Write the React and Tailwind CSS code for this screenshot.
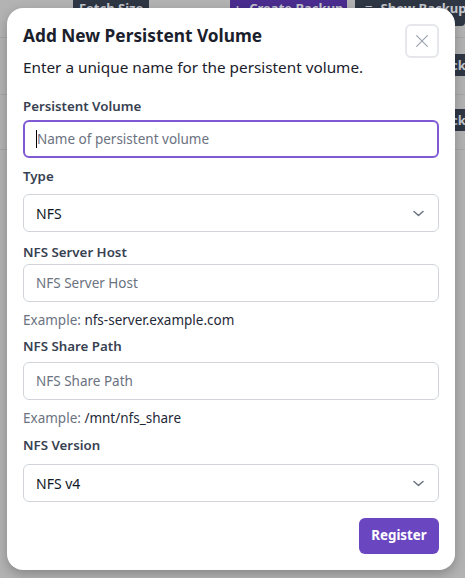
import React from "react";

function Chevron() {
  return (
    <svg width="11" height="7" viewBox="0 0 11 7" fill="none" stroke="#6b7280" strokeWidth="1.5" strokeLinecap="round" strokeLinejoin="round">
      <path d="M1 1.5l4.5 4 4.5-4" />
    </svg>
  );
}

function Label({ children }) {
  return <div className="text-[13.3px] font-semibold text-[#374151] leading-5">{children}</div>;
}

function TextInput({ placeholder, focused }) {
  return (
    <div
      className={
        focused
          ? "h-[38px] w-full rounded-md border-2 border-[#805ad5] px-[11px] flex items-center"
          : "h-[38px] w-full rounded-md border border-[#d1d5db] px-[12px] flex items-center"
      }
    >
      {focused && <span className="w-px h-[18px] bg-black" />}
      <span className="text-[13.5px] text-[#6b7280]">{placeholder}</span>
    </div>
  );
}

function Select({ value }) {
  return (
    <div className="h-[38px] w-full rounded-md border border-[#d1d5db] pl-[12px] pr-[14px] flex items-center justify-between">
      <span className="text-[14px] text-[#111827]">{value}</span>
      <Chevron />
    </div>
  );
}

function BgButton({ className, children }) {
  return (
    <div className={"h-[34px] mt-[-8px] rounded-[4px] flex items-center whitespace-nowrap overflow-hidden text-[13px] font-bold text-[#c4c8ce] " + className}>
      {children}
    </div>
  );
}

export default function App() {
  return (
    <div className="relative w-[465px] h-[578px] overflow-hidden bg-[#b3b3b3]" style={{ fontFamily: '"Noto Sans", "Open Sans", sans-serif' }}>
      {/* background page */}
      <div className="flex flex-col">
        <div className="flex h-[26px] items-start">
          <BgButton className="ml-[73px] w-[82px] bg-[#2f3644] justify-center">Fetch Size</BgButton>
          <BgButton className="ml-[81px] w-[126px] bg-[#4a2d8f] justify-center gap-[8px]"><span>+</span><span>Create Backup</span></BgButton>
          <BgButton className="ml-[8px] w-[110px] shrink-0 bg-[#2f3644] pl-[10px] gap-[8px]"><span>≡</span><span>Show Backups</span></BgButton>
        </div>
        <div className="h-[11px]" />
        <div className="h-px bg-[#a6a6a6]" />
        <div className="h-[16px]" />
        <div className="flex justify-end">
          <div className="w-[14px] h-[22px] bg-[#2f3644] rounded-l-[3px] overflow-hidden whitespace-nowrap text-[13px] font-bold text-[#c4c8ce] leading-[22px]">ckup</div>
        </div>
        <div className="h-[18px]" />
        <div className="h-px bg-[#a6a6a6]" />
        <div className="h-[14px]" />
        <div className="flex justify-end">
          <div className="w-[14px] h-[22px] bg-[#2f3644] rounded-l-[3px] overflow-hidden whitespace-nowrap text-[13px] font-bold text-[#c4c8ce] leading-[22px]">ckup</div>
        </div>
        <div className="h-[18px]" />
        <div className="h-px bg-[#a6a6a6]" />
      </div>

      {/* modal */}
      <div className="absolute left-[7px] top-[8px] w-[448px] h-[562px] bg-white rounded-[16px] shadow-[0_4px_12px_rgba(0,0,0,0.25)] px-[16px] pt-[16px] flex flex-col">
        <div className="flex justify-between items-start h-[57px]">
          <div className="flex flex-col">
            <div className="text-[17.3px] font-bold text-[#1a202c] leading-[28px] mt-[-2px]">Add New Persistent Volume</div>
            <div className="text-[15.3px] text-[#1a202c] leading-[24px] mt-[5px]">Enter a unique name for the persistent volume.</div>
          </div>
          <div className="w-[34px] h-[34px] border-2 border-[#e5e7eb] rounded-md flex items-center justify-center">
            <svg width="16" height="16" viewBox="0 0 24 24" fill="none" stroke="#9ca3af" strokeWidth="1.8" strokeLinecap="round">
              <path d="M4 4l16 16M20 4L4 20" />
            </svg>
          </div>
        </div>

        <div className="mt-[15px] flex flex-col">
          <Label>Persistent Volume</Label>
          <div className="mt-[4px]"><TextInput placeholder="Name of persistent volume" focused /></div>

          <div className="mt-[8px]"><Label>Type</Label></div>
          <div className="mt-[8px]"><Select value="NFS" /></div>

          <div className="mt-[10px]"><Label>NFS Server Host</Label></div>
          <div className="mt-[2px]"><TextInput placeholder="NFS Server Host" /></div>
          <div className="mt-[8px] text-[13.5px] leading-5 text-[#6b7280]">Example: <span className="text-[#1f2937]">nfs-server.example.com</span></div>

          <div className="mt-[6px]"><Label>NFS Share Path</Label></div>
          <div className="mt-[6px]"><TextInput placeholder="NFS Share Path" /></div>
          <div className="mt-[8px] text-[13.5px] leading-5 text-[#6b7280]">Example: <span className="text-[#1f2937]">/mnt/nfs_share</span></div>

          <div className="mt-[7px]"><Label>NFS Version</Label></div>
          <div className="mt-[9px]"><Select value="NFS v4" /></div>

          <div className="mt-[16px] flex justify-end">
            <div className="w-[80px] h-[36px] rounded-md bg-[#6b46c1] text-white text-[13.3px] font-bold flex items-center justify-center">Register</div>
          </div>
        </div>
      </div>
    </div>
  );
}
